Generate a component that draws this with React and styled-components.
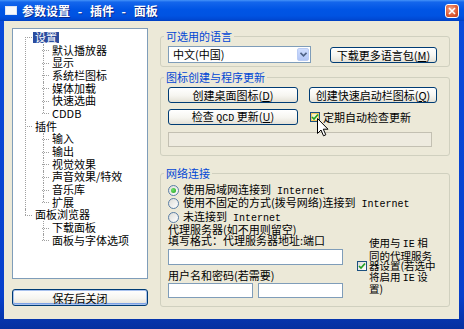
import React from 'react';
import styled, { createGlobalStyle } from 'styled-components';

const UI_FONT = `"Noto Sans CJK SC", "Noto Sans", sans-serif`;
const MONO_FONT = `"Liberation Mono", "DejaVu Sans Mono", monospace`;
const ROW = 12.7;

const GlobalStyle = createGlobalStyle`
  html, body { margin: 0; padding: 0; background: #ffffff; }
  *, *::before, *::after { box-sizing: border-box; }
`;

const Window = styled.div`
  position: relative;
  width: 464px;
  height: 329px;
  display: flex;
  flex-direction: column;
  background: linear-gradient(to bottom, #0A4BDB, #0740CC 90%, #05309F);
  font-family: ${UI_FONT};
  font-size: 11px;
  color: #000;
  overflow: hidden;
`;

const TitleBar = styled.div`
  height: 21px;
  flex: none;
  display: flex;
  align-items: center;
  padding: 0 5px;
  background: linear-gradient(#4593F8 0%, #1466EC 10%, #0055E5 45%, #0053E2 75%, #0049D4 92%, #003FBE 100%);
`;

const TitleIcon = styled.span`
  width: 12px;
  height: 9px;
  background: #F6F8FC;
  border: 1px solid #DCE4F4;
  flex: none;
`;

const TitleText = styled.span`
  margin-left: 5px;
  color: #fff;
  font-weight: bold;
  font-size: 12px;
  word-spacing: 5px;
  text-shadow: 1px 1px 0 #0B2A8A;
  white-space: nowrap;
`;

const CloseButton = styled.span`
  margin-left: auto;
  width: 14px;
  height: 14px;
  border: 1px solid #fff;
  border-radius: 3px;
  background: radial-gradient(circle at 40% 35%, #F6A488, #DC5A34 60%, #BC3C1B);
  display: flex;
  align-items: center;
  justify-content: center;
`;

const Body = styled.div`
  flex: 1;
  margin: 0 5px 10px 4px;
  background: #ECE9D8;
  display: flex;
  gap: 12px;
  padding: 7px 9px 0 8px;
`;

const LeftColumn = styled.div`
  width: 136px;
  display: flex;
  flex-direction: column;
`;

const TreeBox = styled.div`
  height: 251px;
  border: 1px solid #7F9DB9;
  background: #fff;
  overflow: hidden;
`;

const TreeList = styled.ul`
  list-style: none;
  margin: 0;
  padding: 2px 0 0 0;
`;

const RootNode = styled.li`
  position: relative;
  &::before {
    content: '';
    position: absolute;
    left: 12px;
    top: ${p => (p.$first ? ROW / 2 : 0)}px;
    bottom: ${p => (p.$last ? `calc(100% - ${ROW / 2}px)` : '0')};
    border-left: 1px dotted #A0A0A0;
  }
`;

const TreeRow = styled.div`
  position: relative;
  height: ${ROW}px;
  display: flex;
  align-items: center;
  padding-left: ${p => p.$indent}px;
  &::before {
    content: '';
    position: absolute;
    left: ${p => p.$indent - 8}px;
    width: 7px;
    top: ${ROW / 2}px;
    border-top: 1px dotted #A0A0A0;
  }
`;

const ChildList = styled.ul`
  list-style: none;
  margin: 0;
  padding: 0;
`;

const ChildNode = styled.li`
  position: relative;
  &::before {
    content: '';
    position: absolute;
    left: 30px;
    top: 0;
    bottom: ${p => (p.$last ? `calc(100% - ${ROW / 2}px)` : '0')};
    border-left: 1px dotted #A0A0A0;
  }
`;

const NodeLabel = styled.span`
  display: inline-block;
  padding: 0 2px;
  line-height: 11px;
  white-space: nowrap;
  background: ${p => (p.$selected ? '#2B4C9E' : 'transparent')};
  color: ${p => (p.$selected ? '#fff' : '#000')};
`;

const Button = styled.button`
  font-family: ${UI_FONT};
  font-size: 11px;
  color: #000;
  width: ${p => p.$w}px;
  height: ${p => p.$h || 16}px;
  flex: none;
  padding: 0;
  line-height: 12px;
  border: 1px solid #003C74;
  border-radius: 3px;
  background: linear-gradient(#FFFFFF, #F6F5F0 55%, #E4E1D6);
  box-shadow: ${p => (p.$default ? 'inset 0 0 0 1px #A9C2EE, inset 0 -1px 0 1px #7DA2E6' : 'none')};
  white-space: nowrap;
`;

const SaveButton = styled(Button)`
  margin-top: 10px;
`;

const Mono = styled.span`
  font-family: ${MONO_FONT};
  font-size: 10px;
`;

const RightColumn = styled.div`
  width: 290px;
  display: flex;
  flex-direction: column;
  padding-top: 3px;
`;

const GroupBox = styled.fieldset`
  position: relative;
  margin: ${p => p.$mt || 0}px 0 0 0;
  padding: ${p => p.$pt}px 0 ${p => p.$pb}px 7px;
  border: 1px solid #D0D0BF;
  border-radius: 3px;
  min-width: 0;
`;

const Legend = styled.legend`
  padding: 0 2px;
  margin-left: -4px;
  color: #0046D5;
  line-height: 10px;
  font-size: 11px;
`;

const Row = styled.div`
  display: flex;
  align-items: center;
  gap: ${p => p.$gap || 0}px;
  margin-top: ${p => p.$mt || 0}px;
`;

const Dropdown = styled.div`
  width: 143px;
  height: 17px;
  flex: none;
  border: 1px solid #7F9DB9;
  background: #fff;
  display: flex;
  align-items: center;
  padding: 1px;
`;

const DropdownValue = styled.span`
  flex: 1;
  padding-left: 3px;
  line-height: 13px;
`;

const DropdownArrow = styled.span`
  width: 12px;
  height: 13px;
  border: 1px solid #BACCF4;
  border-radius: 2px;
  background: linear-gradient(#CFDDFE, #B2C6F6);
  display: flex;
  align-items: center;
  justify-content: center;
`;

const CheckLabel = styled.label`
  display: flex;
  align-items: center;
  gap: ${p => p.$gap || 3}px;
  margin-left: ${p => p.$ml || 0}px;
  margin-bottom: ${p => p.$mb || 0}px;
  line-height: 12px;
`;

const CheckBox = styled.span`
  width: 10px;
  height: 10px;
  flex: none;
  border: 1px solid #1C5180;
  background: ${p => (p.$hover ? 'linear-gradient(135deg, #E9EFC6, #FDF6D8)' : 'linear-gradient(135deg, #DCDCD7, #FFFFFF)')};
  box-shadow: ${p => (p.$hover ? 'inset 0 0 0 1px #F4C85F' : 'none')};
  display: flex;
  align-items: center;
  justify-content: center;
`;

const Progress = styled.div`
  margin-top: 7px;
  width: 264px;
  height: 15px;
  border: 1px solid #C3C0B2;
  background: #EEEBDF;
`;

const RadioRow = styled.label`
  display: flex;
  align-items: center;
  gap: 4px;
  height: 13.5px;
  line-height: 13px;
  white-space: nowrap;
`;

const Radio = styled.span`
  width: 11px;
  height: 11px;
  flex: none;
  border-radius: 50%;
  border: 1px solid #5A7EA5;
  background: linear-gradient(135deg, #DCDCD7, #FFFFFF);
  display: flex;
  align-items: center;
  justify-content: center;
  &::after {
    content: '';
    display: ${p => (p.$checked ? 'block' : 'none')};
    width: 5px;
    height: 5px;
    border-radius: 50%;
    background: radial-gradient(circle at 35% 35%, #6FE06A, #21A121);
  }
`;

const ProxyRow = styled.div`
  display: flex;
  align-items: flex-end;
  gap: 14px;
`;

const ProxyColumn = styled.div`
  width: 175px;
  display: flex;
  flex-direction: column;
`;

const TextLine = styled.div`
  height: 11px;
  line-height: 11px;
  white-space: nowrap;
  margin-top: ${p => p.$mt || 0}px;
`;

const TextInput = styled.input`
  width: ${p => p.$w}px;
  height: ${p => p.$h}px;
  margin: ${p => p.$mt || 0}px 0 0 0;
  padding: 0 2px;
  border: 1px solid #7F9DB9;
  background: #fff;
  font-family: ${UI_FONT};
  font-size: 11px;
  outline: none;
`;

const InputPair = styled.div`
  display: flex;
  gap: 5px;
  margin-top: 1.5px;
`;

const SideNote = styled.span`
  width: 72px;
  font-size: 10.5px;
  line-height: 10.5px;
`;

const Cursor = styled.svg`
  position: absolute;
  left: 317px;
  top: 118px;
`;

const tree = [
  { label: '设置', selected: true, children: ['默认播放器', '显示', '系统栏图标', '媒体加载', '快速选曲', 'CDDB'] },
  { label: '插件', children: ['输入', '输出', '视觉效果', '声音效果/特效', '音乐库', '扩展'] },
  { label: '面板浏览器', children: ['下载面板', '面板与字体选项'] },
];

const Check = () => (
  <svg width="8" height="8" viewBox="0 0 8 8">
    <path d="M1 4 L3 6 L7 1.5" fill="none" stroke="#21A121" strokeWidth="1.7" />
  </svg>
);

const Internet = () => <Mono> Internet</Mono>;

export default function App() {
  return (
    <Window>
      <GlobalStyle />
      <TitleBar>
        <TitleIcon />
        <TitleText>参数设置 - 插件 - 面板</TitleText>
        <CloseButton>
          <svg width="8" height="8" viewBox="0 0 8 8">
            <path d="M1 1 L7 7 M7 1 L1 7" stroke="#fff" strokeWidth="1.6" />
          </svg>
        </CloseButton>
      </TitleBar>
      <Body>
        <LeftColumn>
          <TreeBox>
            <TreeList>
              {tree.map((node, i) => (
                <RootNode key={node.label} $first={i === 0} $last={i === tree.length - 1}>
                  <TreeRow $indent={20}>
                    <NodeLabel $selected={node.selected}>{node.label}</NodeLabel>
                  </TreeRow>
                  <ChildList>
                    {node.children.map((child, j) => (
                      <ChildNode key={child} $last={j === node.children.length - 1}>
                        <TreeRow $indent={37}>
                          <NodeLabel>{child}</NodeLabel>
                        </TreeRow>
                      </ChildNode>
                    ))}
                  </ChildList>
                </RootNode>
              ))}
            </TreeList>
          </TreeBox>
          <SaveButton $w={136} $h={17} $default>保存后关闭</SaveButton>
        </LeftColumn>

        <RightColumn>
          <GroupBox $pt={5} $pb={3}>
            <Legend>可选用的语言</Legend>
            <Row $gap={19}>
              <Dropdown>
                <DropdownValue>中文(中国)</DropdownValue>
                <DropdownArrow>
                  <svg width="7" height="5" viewBox="0 0 7 5">
                    <path d="M0.5 0.8 L3.5 3.8 L6.5 0.8" fill="none" stroke="#4D6185" strokeWidth="1.6" />
                  </svg>
                </DropdownArrow>
              </Dropdown>
              <Button $w={107}>下载更多语言包(<u>M</u>)</Button>
            </Row>
          </GroupBox>

          <GroupBox $mt={5} $pt={5} $pb={8}>
            <Legend>图标创建与程序更新</Legend>
            <Row $gap={11}>
              <Button $w={130}>创建桌面图标(<u>D</u>)</Button>
              <Button $w={128}>创建快速启动栏图标(<u>Q</u>)</Button>
            </Row>
            <Row $mt={6}>
              <Button $w={130}>检查 <Mono>QCD</Mono> 更新(<u>U</u>)</Button>
              <CheckLabel $ml={12}>
                <CheckBox $hover><Check /></CheckBox>
                定期自动检查更新
              </CheckLabel>
            </Row>
            <Progress />
          </GroupBox>

          <GroupBox $mt={12} $pt={5.5} $pb={8}>
            <Legend>网络连接</Legend>
            <RadioRow>
              <Radio $checked />
              <span>使用局域网连接到<Internet /></span>
            </RadioRow>
            <RadioRow>
              <Radio />
              <span>使用不固定的方式(拨号网络)连接到<Internet /></span>
            </RadioRow>
            <RadioRow>
              <Radio />
              <span>未连接到<Internet /></span>
            </RadioRow>
            <ProxyRow>
              <ProxyColumn>
                <TextLine>代理服务器(如不用则留空)</TextLine>
                <TextLine>填写格式：代理服务器地址:端口</TextLine>
                <TextInput $w={175} $h={16} $mt={2.5} readOnly />
                <TextLine $mt={5.5}>用户名和密码(若需要)</TextLine>
                <InputPair>
                  <TextInput $w={85} $h={15} readOnly />
                  <TextInput $w={85} $h={15} readOnly />
                </InputPair>
              </ProxyColumn>
              <CheckLabel $gap={2} $mb={3}>
                <CheckBox><Check /></CheckBox>
                <SideNote>
                  使用与 <Mono>IE</Mono> 相<br />
                  同的代理服务<br />
                  器设置(若选中<br />
                  将启用 <Mono>IE</Mono> 设<br />
                  置)
                </SideNote>
              </CheckLabel>
            </ProxyRow>
          </GroupBox>
        </RightColumn>
      </Body>
      <Cursor width="12" height="19" viewBox="0 0 12 19">
        <path d="M0.5 0.5 L0.5 15.5 L4 12 L6.5 17.8 L8.8 16.8 L6.3 11.2 L11 11.2 Z" fill="#fff" stroke="#000" strokeWidth="1" />
      </Cursor>
    </Window>
  );
}
